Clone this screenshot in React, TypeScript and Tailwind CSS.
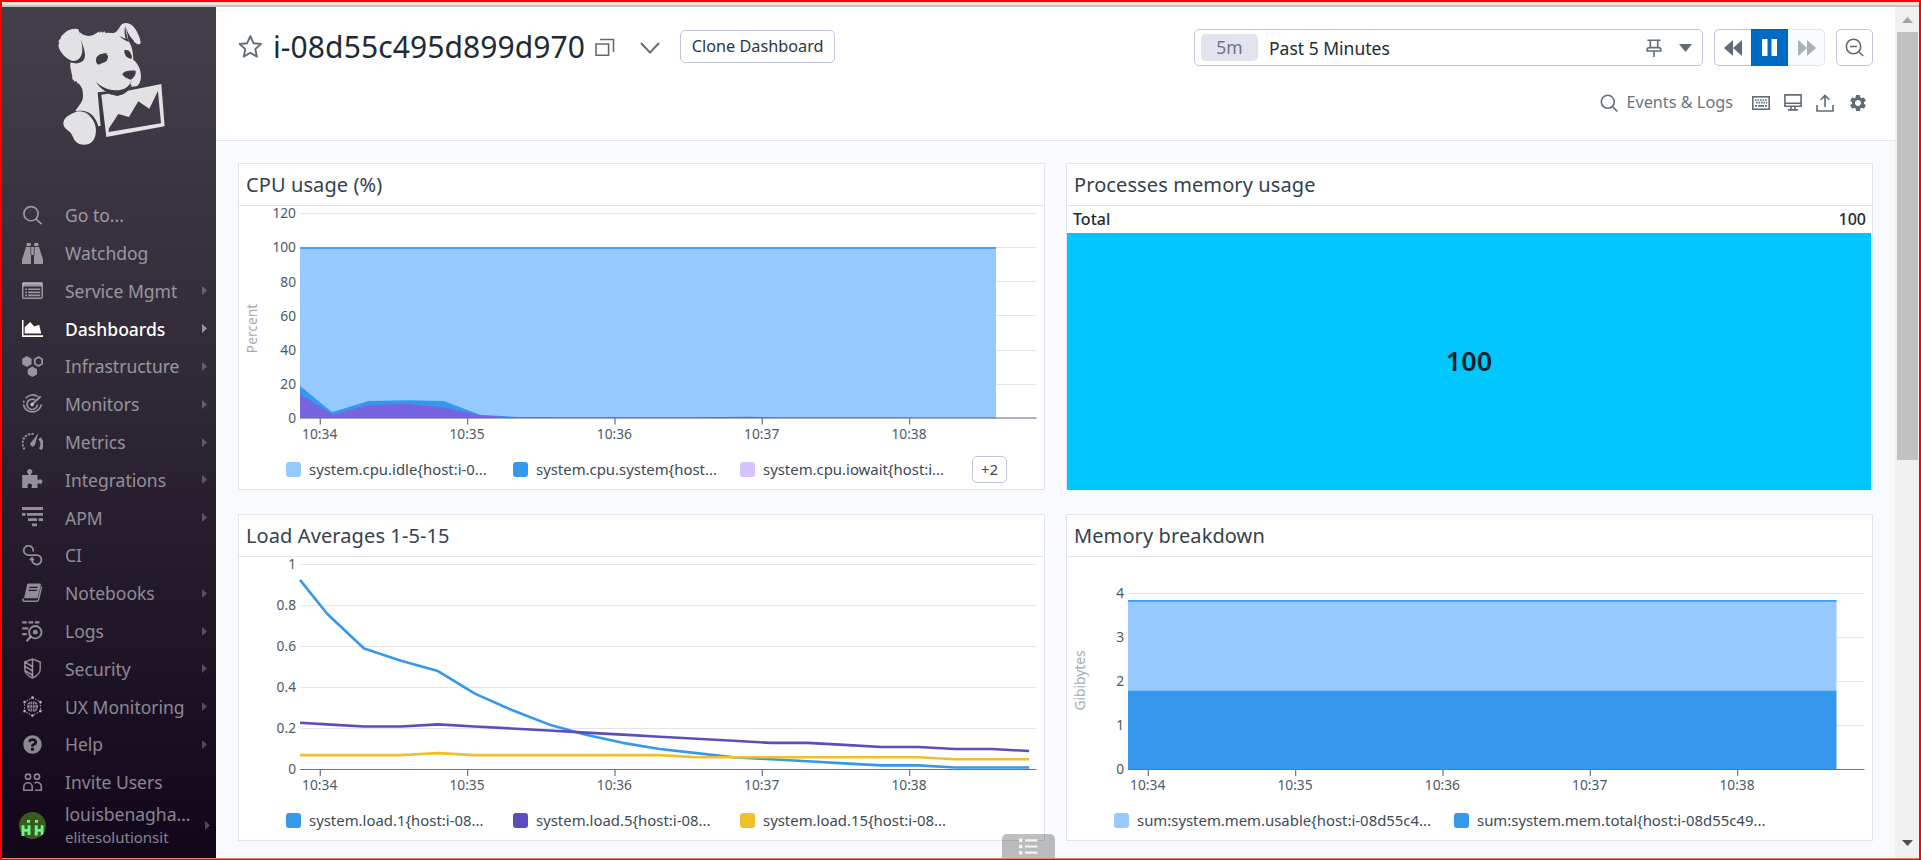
import type { ReactNode } from "react";
import { MdSettings } from "react-icons/md";
import { FaQuestionCircle } from "react-icons/fa";

/* ---------- Logo ---------- */

function DogLogo() {
  return (
    <svg width="113.300" height="126.700" viewBox="165 60 340 380" className="block shrink-0" fill="#e2e1e4">
      {/* head and chest */}
      <path d="M238 96L250 104L264 108C274 108 282 104 290 99L299 94L298 99L306 94L307 98L315 94L315 98L341 99C350 96 353 90 358 83C363 73 370 69 378 69C390 69 399 76 406 88C414 101 421 116 422 128C420 135 413 134 407 129C399 122 390 112 384 101L386 124C394 136 400 152 400 180C414 188 424 212 423 232C422 244 419 252 412 258L388 262L380 276L305 286L306 377L293 379C287 357 270 337 226 333C236 317 249 307 249 288C249 272 246 262 240 256L236 250L234 252L229 243L225 245L217 237C218 222 209 208 211 188L240 150Z" />
      {/* left ear with shadow */}
      <path d="M232 95C240 110 254 145 255 165C255 183 241 191 224 190L210 187Z" fill="#403a46" />
      <path d="M238 96C240 106 247 128 247 150C246 171 236 183 220 183C202 181 177 157 175 135L178 128L175 124L184 112L182 110L197 96C209 88 225 84 235 88Z" />
      {/* right ear fold */}
      <path d="M376 76C376 90 380 105 386 126C376 122 366 117 359 109C367 112 373 115 377 117C373 104 373 90 376 76Z" fill="#403a46" />
      <path d="M378 80C383 98 390 110 402 122L398 127L386 123C385 108 379 96 378 80Z" fill="#403a46" />
      <path d="M377 78C382 96 392 114 407 127C413 134 420 133 421 128C420 110 407 86 395 76Z" />
      {/* eyes and nose */}
      <path d="M288 181C288 168 300 160 321 160L320 166L324 166C325 180 318 188 309 188L296 194C290 192 288 187 288 181Z" fill="#403a46" />
      <path d="M373 151C381 147 391 152 393 162L396 168L395 176C383 177 372 166 373 151Z" fill="#403a46" />
      <path d="M367 222C372 213 391 210 407 212C409 224 401 234 392 239C380 235 369 229 367 222Z" fill="#403a46" />
      <path d="M396 236L389 256L391 261L397 258L391 254Z" fill="#403a46" />
      {/* foreleg */}
      <path d="M229 334C261 327 286 345 295 379L287 380C283 359 270 340 248 335Z" fill="#403a46" />
      <path d="M229 335C259 330 286 356 288 389C288 417 276 434 252 434C236 434 223 425 217 407C211 391 190 388 190 370C190 353 210 342 229 335Z" />
      {/* picture frame */}
      <path d="M293 277L325 274L350 281L384 268L484 252L494 379L319 411L310 379L302 378Z" fill="#403a46" />
      <path d="M304 284L325 281L352 288L372 281L383 272L484 252L494 379L319 411Z" />
      <path d="M326 396L327 385L355 342L387 351L415 304L448 326L474 273L483 370Z" fill="#403a46" />
      <path d="M288 245C300 258 322 270 346 271C368 272 382 264 391 250C392 263 384 275 371 281C355 289 338 285 325 279C309 270 296 260 288 245Z" fill="#403a46" />
    </svg>
  );
}

/* ---------- Sidebar icons (21 x 21 box) ---------- */

const Icon = ({ children }: { children: ReactNode }) => (
  <svg width="21" height="21" viewBox="0 0 21 21" fill="currentColor" className="block shrink-0">
    {children}
  </svg>
);

const icons: Record<string, ReactNode> = {
  search: (
    <Icon>
      <circle cx="9" cy="8.700" r="7.100" fill="none" stroke="currentColor" strokeWidth="1.600" />
      <path d="M14 14l5.600 5.200" stroke="currentColor" strokeWidth="1.700" />
    </Icon>
  ),
  binoculars: (
    <Icon>
      <path d="M4.600 0h4.200v3H4.600zM12.200 0h4.200v3h-4.200zM4 4h4.500v8h.5v9H0v-4.500zM17 4h-4.500v8H12v9h9v-4.500zM9.200 4h2.600v8H9.200z" />
    </Icon>
  ),
  service: (
    <Icon>
      <rect x=".75" y="2.750" width="19.500" height="15.500" rx="1" fill="none" stroke="currentColor" strokeWidth="1.500" />
      <path d="M1 3h19v3.600H1zM3.200 8.400h1.800v1.600H3.200zM3.200 11.600h1.800v1.600H3.200zM3.200 14.600h1.800v1.600H3.200zM6.200 8.400h12v1.600h-12zM6.200 11.600h12v1.600h-12zM6.200 14.600h12v1.600h-12z" />
    </Icon>
  ),
  dashboards: (
    <Icon>
      <path d="M0 2h1.500v15.200H21V19H0zM2.700 15.600V9.200L8.200 4l4 4.600 5-1.900 2 8.900z" />
    </Icon>
  ),
  infra: (
    <Icon>
      <path d="M4.900 0l4.700 2.800v5.400l-4.700 2.800L.2 8.200V2.800zM10.400 10.400l4.700 2.800v5l-4.700 2.800-4.700-2.800v-5z" />
      <path d="M16.500 1l3.700 2.200v4.500l-3.700 2.200-3.700-2.200V3.200z" fill="none" stroke="currentColor" strokeWidth="1.700" />
    </Icon>
  ),
  monitors: (
    <Icon>
      <g fill="none" stroke="currentColor" strokeWidth="1.700">
        <path d="M16 2.600A9.200 9.200 0 0 0 3.600 4.200M1.400 10.500A9.100 9.100 0 0 0 19.300 10.500M1.500 8.800l.5-2" />
        <path d="M13 5.900A5.200 5.200 0 1 0 15.400 10.500" />
        <path d="M9 11.200l9.800-9" strokeWidth="1.900" />
      </g>
      <circle cx="10.200" cy="10.600" r="2" />
    </Icon>
  ),
  metrics: (
    <Icon>
      <path d="M2.600 17.300A9.400 9.400 0 0 1 12 2.200" fill="none" stroke="currentColor" strokeWidth="2" strokeDasharray="2.200 1.200" />
      <path d="M17.600 6.200a9.600 9.600 0 0 1 .7 11.200" fill="none" stroke="currentColor" strokeWidth="3" />
      <path d="M16.600.8L12.800 13a2.200 2.200 0 0 1-4.300-1.800z" />
    </Icon>
  ),
  integrations: (
    <Icon>
      <path d="M.2 6h5.600c.8 0 .9-.7.5-1.300A2.500 2.500 0 1 1 9 4.700c-.4.600-.2 1.300.6 1.300h5.900v4.200c0 .8.700.9 1.300.5a2.300 2.300 0 1 1 0 3.800c-.6-.4-1.300-.2-1.300.5v4h-5.300c-.8 0-.8-.8-.3-1.400a2.300 2.300 0 1 0-4.300 0c.5.600.3 1.400-.4 1.400H.2z" />
    </Icon>
  ),
  apm: (
    <Icon>
      <path d="M0 0h21v2.900H0zM0 6h3.600v2.700H0zM5 6h16v2.700H5zM6 11.200h9v2.700H6zM16.600 11.200H21v2.700h-4.400zM10 16.600h5v2.700h-5z" />
    </Icon>
  ),
  ci: (
    <Icon>
      <path
        d="M11 6.600A4.700 4.700 0 1 0 6.300 10.100H14.600A4.700 4.700 0 1 1 10 14.800"
        fill="none"
        stroke="currentColor"
        strokeWidth="1.800"
      />
      <path d="M6.800 15.300l3.300-3.900 2.800 3.900z" />
    </Icon>
  ),
  notebooks: (
    <Icon>
      <path
        fillRule="evenodd"
        d="M6.600.4h11c1 0 1.500.7 1.300 1.700l-2.900 11.800c-.2.900-.8 1.400-1.800 1.400H2L5 2.100C5.200 1 5.700.4 6.600.4zM7.600 3.700l-.4 1.400h8.200l.4-1.400zM6.900 6.700l-.4 1.400h8.200l.4-1.400z"
      />
      <path d="M19.700 3.600l-3.300 13.200c-.3 1-.7 1.500-1.700 1.500H2.300c-1.400 0-1.700-1.300-.8-2.800" fill="none" stroke="currentColor" strokeWidth="1.500" />
    </Icon>
  ),
  logs: (
    <Icon>
      <path d="M.2.300h4.600v2.200H.2zM6.500.300h4.600v2.200H6.500zM12.800.300h4.600v2.200h-4.600zM.2 6.200h6v2.200h-6zM.2 12h4.600v2.200H.2z" />
      <circle cx="13.300" cy="11.200" r="6.200" fill="none" stroke="currentColor" strokeWidth="1.900" />
      <path d="M8.800 15.600l-4.300 4.700" stroke="currentColor" strokeWidth="2.200" />
      <circle cx="13.300" cy="11.200" r="2.400" />
    </Icon>
  ),
  security: (
    <Icon>
      <g fill="none" stroke="currentColor" strokeWidth="1.500">
        <path d="M10.500 1l7.700 3v7.200c0 4-3.400 6.800-7.700 8.800-4.300-2-7.700-4.800-7.700-8.800V4zM10.500 1v19" />
        <path d="M3 4.300l7.500 4.200M3 8.600l7.500 4.200M3.500 13l7 4" strokeWidth="1.700" />
      </g>
    </Icon>
  ),
  ux: (
    <Icon>
      <path d="M10.500 1.500l8 4.600v9l-8 4.600-8-4.600v-9z" fill="none" stroke="currentColor" strokeWidth="1.100" strokeDasharray="1.700 1.300" />
      <circle cx="10.500" cy="10.500" r="5.600" />
      <path d="M10.500 5v11M5 8.700h11M5 12.300h11" stroke="#1c1020" strokeWidth=".7" />
      <ellipse cx="10.500" cy="10.500" rx="2.700" ry="5.500" fill="none" stroke="#1c1020" strokeWidth=".7" />
      <circle cx="10.500" cy="1.500" r="1.500" />
      <circle cx="10.500" cy="19.500" r="1.500" />
      <circle cx="2.500" cy="6" r="1.500" />
      <circle cx="18.500" cy="6" r="1.500" />
      <circle cx="2.500" cy="15" r="1.500" />
      <circle cx="18.500" cy="15" r="1.500" />
    </Icon>
  ),
  help: (
    <span className="flex w-[21px] justify-center">
      <FaQuestionCircle size={19} />
    </span>
  ),
  invite: (
    <Icon>
      <g fill="none" stroke="currentColor" strokeWidth="1.600">
        <circle cx="6" cy="4.700" r="2.600" />
        <circle cx="15" cy="4.700" r="2.600" />
        <path d="M1.800 18.200v-3.200a4.200 4.200 0 0 1 8.400 0v3.200zM12.600 11.200a4.200 4.200 0 0 1 6.700 3.800v3.200h-6.500" />
      </g>
    </Icon>
  ),
};

type NavItem = { icon: string; label: string; arrow?: boolean; active?: boolean };

const nav: NavItem[] = [
  { icon: "search", label: "Go to..." },
  { icon: "binoculars", label: "Watchdog" },
  { icon: "service", label: "Service Mgmt", arrow: true },
  { icon: "dashboards", label: "Dashboards", arrow: true, active: true },
  { icon: "infra", label: "Infrastructure", arrow: true },
  { icon: "monitors", label: "Monitors", arrow: true },
  { icon: "metrics", label: "Metrics", arrow: true },
  { icon: "integrations", label: "Integrations", arrow: true },
  { icon: "apm", label: "APM", arrow: true },
  { icon: "ci", label: "CI" },
  { icon: "notebooks", label: "Notebooks", arrow: true },
  { icon: "logs", label: "Logs", arrow: true },
  { icon: "security", label: "Security", arrow: true },
  { icon: "ux", label: "UX Monitoring", arrow: true },
  { icon: "help", label: "Help", arrow: true },
  { icon: "invite", label: "Invite Users" },
];

const Arrow = () => (
  <svg width="5" height="9" viewBox="0 0 5 9" fill="currentColor" className="block shrink-0">
    <path d="M0 0l5 4.500L0 9z" />
  </svg>
);

function Sidebar() {
  return (
    <aside className="flex w-[214px] shrink-0 flex-col bg-linear-to-b from-[#453f4b] via-[#2f2836] via-45% to-[#11061a]">
      <div className="flex h-[189.5px] shrink-0 items-start pt-[13px] pl-[53px]">
        <DogLogo />
      </div>
      <nav className="flex flex-col text-[17.5px]">
        {nav.map((n) => (
          <a
            key={n.label}
            className={
              n.active
                ? "flex h-[37.8px] items-center pr-[9px] pl-5 font-medium text-white"
                : "flex h-[37.8px] items-center pr-[9px] pl-5 text-white/50"
            }
          >
            {icons[n.icon]}
            <span className="ml-[22px] flex-1 whitespace-nowrap">{n.label}</span>
            {n.arrow && (
              <span className={n.active ? "text-white/50" : "text-white/25"}>
                <Arrow />
              </span>
            )}
          </a>
        ))}
      </nav>
      <div className="flex flex-1 items-center pr-[6px] pb-[9px] pl-[17px] text-white/50">
        <svg width="27" height="27" viewBox="0 0 27 27" className="block shrink-0">
          <circle cx="13.500" cy="13.500" r="13.500" fill="#3a5a1f" />
          <path
            d="M8 8h3v2.800H8zM16 8h3v2.800h-3zM2.500 13.300h3v3.700h3v-3.700h3V23h-3v-3.200h-3V24h-3zM15.700 13.300h3v3.700h3v-3.700h2.800V22l-2.800 2v-4.200h-3V23.500h-3z"
            fill="#6cf58a"
          />
        </svg>
        <div className="ml-[19px] flex flex-1 flex-col">
          <span className="text-[17.5px] leading-[23px] whitespace-nowrap">louisbenagha...</span>
          <span className="text-[15px] leading-[22px]">elitesolutionsit</span>
        </div>
        <span className="text-white/25">
          <Arrow />
        </span>
      </div>
    </aside>
  );
}

/* ---------- Header ---------- */

function Header() {
  return (
    <header className="flex h-[134px] shrink-0 flex-col border-b border-[#e1e3ee] bg-white pr-[22px] pl-[22px]">
      <div className="flex h-[82px] items-start">
        <div className="flex h-[80px] flex-1 items-start">
          <svg width="25" height="25" viewBox="0 0 25 25" className="mt-[27px] block shrink-0" fill="none" stroke="#626c75" strokeWidth="1.900" strokeLinejoin="round">
            <path d="M12.300 2.200l3.100 7 7.500.8-5.600 5.100 1.600 7.500-6.600-3.800-6.600 3.800 1.600-7.500L1.700 10l7.500-.8z" />
          </svg>
          <h1 className="mt-[18px] ml-[10px] text-[30px] leading-[44px] tracking-[0.1px] text-[#1c2b34]">i-08d55c495d899d970</h1>
          <svg width="20" height="19" viewBox="0 0 20 19" className="mt-[31px] ml-[10px] block shrink-0" fill="none" stroke="#626c75" strokeWidth="1.600">
            <path d="M1 6h12.600v11.200H1zM5 1.500h13.500v12.500" />
          </svg>
          <svg width="20" height="13" viewBox="0 0 20 13" className="mt-[35px] ml-[25px] block shrink-0" fill="none" stroke="#626c75" strokeWidth="2">
            <path d="M1 1l9 9.600L19 1" />
          </svg>
          <button className="mt-[23px] ml-5 flex h-[33px] w-[155px] items-center justify-center rounded-[5px] border border-[#c0c5de] text-[16.25px] whitespace-nowrap text-[#2a3742]">
            Clone Dashboard
          </button>
        </div>
        <div className="mt-[22px] flex h-[37px] gap-[11px]">
          <div className="flex w-[509px] items-center rounded-[5px] border border-[#c0c5de] pr-2.5 pl-1.5">
            <span className="flex h-[27px] w-[57px] items-center justify-center rounded-[5px] bg-[#e1e4ef] text-[17.5px] text-[#6b757e]">5m</span>
            <span className="ml-[11px] flex-1 pt-0.5 text-[17.5px] text-[#1c2b34]">Past 5 Minutes</span>
            <svg width="16" height="18" viewBox="0 0 16 18" className="mr-[17px] block" fill="none" stroke="#626c75" strokeWidth="1.600">
              <path d="M1.500 1.300h13M4.300 1.300v7.200M11.700 1.300v7.200M1.200 12V10.500c0-1.200 1-1.900 2.300-1.900h9c1.300 0 2.300.7 2.300 1.900V12zM8 12v6" />
            </svg>
            <svg width="13" height="8" viewBox="0 0 13 8" className="block" fill="#626c75">
              <path d="M0 0h13L6.500 8z" />
            </svg>
          </div>
          <div className="flex w-[111px]">
            <span className="flex w-[37px] items-center justify-center rounded-l-[5px] border border-r-0 border-[#c0c5de] pr-px">
              <svg width="18" height="16" viewBox="0 0 18 16" fill="#626c75">
                <path d="M9 0v16L0 8zM18 0v16L9 8z" />
              </svg>
            </span>
            <span className="flex w-[37px] items-center justify-center border border-[#0a5cb5] bg-[#006bc2]">
              <svg width="15" height="17" viewBox="0 0 15 17" fill="#fff">
                <path d="M0 0h5.500v17H0zM9.500 0H15v17H9.500z" />
              </svg>
            </span>
            <span className="flex w-[37px] items-center justify-center rounded-r-[5px] border border-l-0 border-[#e1e3ee] bg-[#f9fafc] pl-px">
              <svg width="18" height="16" viewBox="0 0 18 16" fill="#aab0b6">
                <path d="M0 0v16l9-8zM9 0v16l9-8z" />
              </svg>
            </span>
          </div>
          <span className="flex w-[37px] items-center justify-center rounded-[5px] border border-[#c0c5de]">
            <svg width="19" height="19" viewBox="0 0 19 19" fill="none" stroke="#626c75" strokeWidth="1.600">
              <circle cx="8.500" cy="8.500" r="7.200" />
              <path d="M13.500 13.500l4.800 4.500M5 8.500h7" />
            </svg>
          </span>
        </div>
      </div>
      <div className="flex h-[27px] items-center justify-end pr-[5px] text-[#626c75]">
        <svg width="18" height="18" viewBox="0 0 18 18" fill="none" stroke="#626c75" strokeWidth="1.600">
          <circle cx="7.800" cy="7.800" r="6.500" />
          <path d="M12.500 12.500l4.800 5" />
        </svg>
        <span className="ml-2 pb-px text-[16.25px] whitespace-nowrap text-[#6b757e]">Events &amp; Logs</span>
        <svg width="18" height="14" viewBox="0 0 18 14" className="ml-[19px]" fill="none" stroke="#626c75">
          <rect x=".8" y=".8" width="16.400" height="12.400" strokeWidth="1.600" />
          <path d="M3 4h12" strokeWidth="1.700" strokeDasharray="1.700 .8" />
          <path d="M4 6.600h11" strokeWidth="1.700" strokeDasharray="1.700 .8" />
          <path d="M3 9.800h2M6 9.800h6M13 9.800h2" strokeWidth="1.700" />
        </svg>
        <svg width="18" height="17" viewBox="0 0 18 17" className="ml-[14px]" fill="none" stroke="#626c75" strokeWidth="1.600">
          <path d="M.9.900h16.200v11.300H.9zM.9 9.300h16.200M7 12.500v3M11 12.500v3M4 15.900h10" />
        </svg>
        <svg width="18" height="18" viewBox="0 0 18 18" className="ml-[14px]" fill="none" stroke="#626c75" strokeWidth="1.600">
          <path d="M1 11v6h16v-6M9 13V1.500M4.700 5.800L9 1.500l4.300 4.300" />
        </svg>
        <MdSettings size={20} className="ml-[14px]" />
      </div>
    </header>
  );
}

/* ---------- Charts ---------- */

const TICKS = ["10:34", "10:35", "10:36", "10:37", "10:38"];

type AxisProps = {
  rows: { label: string; y: number }[];
  baseline: number;
  unit?: string;
  unitY?: number;
  children: ReactNode;
};

/* Plot coordinates are relative to the inside of the card body: 805 x 239. */
function Plot({ rows, baseline, unit, unitY = 0, children }: AxisProps) {
  return (
    <svg width="805" height="239" viewBox="0 0 805 239" className="block shrink-0 overflow-visible">
      {rows.map((r) => (
        <path key={r.label} d={`M61 ${Math.floor(r.y) + 0.5}H797`} stroke="#e4e5e9" />
      ))}
      {children}
      <path d={`M61 ${baseline}H797.500`} stroke="#6a7189" strokeWidth="1.200" />
      {rows.map((r) => (
        <text key={r.label} x="57" y={r.y + 4.9} textAnchor="end" className="fill-[#4b5a66] text-[13.75px]">
          {r.label}
        </text>
      ))}
      {TICKS.map((t, i) => (
        <g key={t}>
          <path d={`M${81.3 + i * 147.33} ${baseline}v6.500`} stroke="#737a92" strokeWidth="1.300" />
          <text x={80.7 + i * 147.33} y="233" textAnchor="middle" className="fill-[#4b5a66] text-[13.75px]">
            {t}
          </text>
        </g>
      ))}
      {unit && (
        <text transform={`translate(17.500 ${unitY}) rotate(-90)`} textAnchor="middle" className="fill-[#a4abb1] text-[13.75px]">
          {unit}
        </text>
      )}
    </svg>
  );
}

const cpuRows = ["120", "100", "80", "60", "40", "20", "0"].map((label, i) => ({ label, y: 7.4 + i * 34.18 }));
const loadRows = ["1", "0.8", "0.6", "0.4", "0.2", "0"].map((label, i) => ({ label, y: 7.4 + i * 41 }));
const memRows = ["4", "3", "2", "1", "0"].map((label, i) => ({ label, y: 36.4 + i * 44 }));

const load1 = [0.76, 0.59, 0.53, 0.48, 0.37, 0.29, 0.22, 0.17, 0.13, 0.1, 0.08, 0.06, 0.05, 0.04, 0.03, 0.02, 0.02, 0.01, 0.01, 0.01];
const load5 = [0.22, 0.21, 0.21, 0.22, 0.21, 0.2, 0.19, 0.18, 0.17, 0.16, 0.15, 0.14, 0.13, 0.13, 0.12, 0.11, 0.11, 0.1, 0.1, 0.09];
const load15 = [0.07, 0.07, 0.07, 0.08, 0.07, 0.07, 0.07, 0.07, 0.07, 0.07, 0.06, 0.06, 0.06, 0.06, 0.06, 0.06, 0.06, 0.05, 0.05, 0.05];

const loadY = (v: number) => 212.5 - v * 205;
const loadLine = (first: number, values: number[]) =>
  `61,${loadY(first)} ` + values.map((v, i) => `${88.1 + i * 36.95},${loadY(v)}`).join(" ");

function Legend({ items, step, more }: { items: { color: string; label: string }[]; step: string; more?: string }) {
  return (
    <div className="flex h-[44px] items-center pt-[5px] pl-[47px] text-[14.9px] text-[#3b4a56]">
      {items.map((it) => (
        <div key={it.label} className={`flex shrink-0 items-center whitespace-nowrap ${step}`}>
          <span className={`mr-2 size-[15px] rounded-[3px] ${it.color}`} />
          {it.label}
        </div>
      ))}
      {more && (
        <span className="ml-[5px] flex h-[27px] w-[35px] items-center justify-center rounded-[5px] border border-[#c0c5de]">{more}</span>
      )}
    </div>
  );
}

function Card({ title, children }: { title: string; children: ReactNode }) {
  return (
    <section className="flex h-[327px] w-[807px] flex-col border border-[#e1e3ee] bg-white">
      <h2 className="flex h-[42px] shrink-0 items-center border-b border-[#e1e3ee] pl-[7px] text-[20px] tracking-[0.1px] text-[#33424e]">
        {title}
      </h2>
      {children}
    </section>
  );
}

function Dashboard() {
  return (
    <div className="grid flex-1 grid-cols-[807px_807px] content-start gap-x-[21px] gap-y-6 bg-[#f9fafc] pt-[22px] pl-[22px]">
      <Card title="CPU usage (%)">
        <Plot rows={cpuRows} baseline={212} unit="Percent" unitY={122.5}>
          <path d="M61 42H757V212H61z" fill="#95c9ff" />
          <path d="M61 42H757" stroke="#479ffa" strokeWidth="2" />
          <path d="M61 179.800L93 206.300L129.500 195L168 194.300L204.500 195L241 208.700L278 211L757 211.400V212H61z" fill="#3598ec" />
          <path d="M61 188L93 208.500L129.500 199L168 197.800L204.500 201.500L241 209.200L275 211.500L450 211.500L510 210.700L535 211.600V212H61z" fill="#7764e0" />
        </Plot>
        <Legend
          step="w-[227px]"
          more="+2"
          items={[
            { color: "bg-[#95c9ff]", label: "system.cpu.idle{host:i-0..." },
            { color: "bg-[#3598ec]", label: "system.cpu.system{host..." },
            { color: "bg-[#d7c1ff]", label: "system.cpu.iowait{host:i..." },
          ]}
        />
      </Card>
      <Card title="Processes memory usage">
        <div className="flex h-[27px] shrink-0 items-center justify-between pr-[6px] pb-px pl-[6px] text-[16px] font-medium text-[#1c2b34]">
          <span>Total</span>
          <span>100</span>
        </div>
        <div className="mr-px -mb-px flex flex-1 items-center justify-center bg-[#00c8ff] text-[27px] font-semibold text-[#10242e]">100</div>
      </Card>
      <Card title="Load Averages 1-5-15">
        <Plot rows={loadRows} baseline={212.5}>
          <g fill="none" strokeWidth="2.600" strokeLinejoin="round">
            <polyline points={loadLine(0.925, load1)} stroke="#3598ec" />
            <polyline points={loadLine(0.228, load5)} stroke="#5c4dbd" />
            <polyline points={loadLine(0.07, load15)} stroke="#eec02a" />
          </g>
        </Plot>
        <Legend
          step="w-[227px]"
          items={[
            { color: "bg-[#3598ec]", label: "system.load.1{host:i-08..." },
            { color: "bg-[#5c4dbd]", label: "system.load.5{host:i-08..." },
            { color: "bg-[#eec02a]", label: "system.load.15{host:i-08..." },
          ]}
        />
      </Card>
      <Card title="Memory breakdown">
        <Plot rows={memRows} baseline={212.5} unit="Gibibytes" unitY={123.5}>
          <path d="M61 43.500H769.500V134H61z" fill="#95c9ff" />
          <path d="M61 43.900H769.500" stroke="#3d9bf7" strokeWidth="1.700" />
          <path d="M61 133.700H769.500V212H61z" fill="#3598ec" />
        </Plot>
        <Legend
          step="w-[340px]"
          items={[
            { color: "bg-[#95c9ff]", label: "sum:system.mem.usable{host:i-08d55c4..." },
            { color: "bg-[#3598ec]", label: "sum:system.mem.total{host:i-08d55c49..." },
          ]}
        />
      </Card>
    </div>
  );
}

function Scrollbar() {
  return (
    <div className="flex w-6 shrink-0 flex-col items-center bg-[#f0f0f0]">
      <svg width="11" height="6" viewBox="0 0 11 6" className="mt-[10px] block shrink-0" fill="#a3a3a3">
        <path d="M0 6h11L5.500 0z" />
      </svg>
      <div className="mt-[9px] h-[428px] w-[21px] shrink-0 bg-[#c1c1c1]" />
      <svg width="11" height="6" viewBox="0 0 11 6" className="mt-auto mb-[12px] block shrink-0" fill="#505050">
        <path d="M0 0h11L5.500 6z" />
      </svg>
    </div>
  );
}

export default function App() {
  return (
    <div className="relative flex h-[860px] w-[1921px] flex-col overflow-hidden border-2 border-b-0 border-[#ff0000] font-['Noto_Sans',sans-serif]">
      <div className="h-[3px] shrink-0 bg-[#efe3e0]" />
      <div className="h-[2px] shrink-0 bg-[#cbc0be]" />
      <div className="flex h-[851px] shrink-0">
        <Sidebar />
        <main className="flex min-w-0 flex-1 flex-col">
          <Header />
          <Dashboard />
        </main>
        <Scrollbar />
      </div>
      <div className="h-px shrink-0 bg-[#f87272]" />
      <div className="h-px shrink-0 bg-[#ff0000]" />
      <div className="absolute bottom-[2px] left-[1000px] flex h-6 w-[53px] justify-center rounded-t-[5px] bg-black/25 pt-1">
        <svg width="19" height="17" viewBox="0 0 19 17" fill="#f4f4f6">
          <path d="M0 .5h3.500v3.500H0zM0 6.700h3.500v3.500H0zM0 13h3.500v3.500H0zM6 1.200h12.500v2.200H6zM6 7.400h12.500v2.200H6zM6 13.600h12.500v2.200H6z" />
        </svg>
      </div>
    </div>
  );
}
